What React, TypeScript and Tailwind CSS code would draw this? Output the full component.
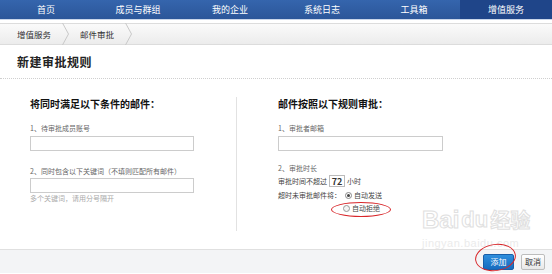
import React from "react";

const tabs = ["首页", "成员与群组", "我的企业", "系统日志", "工具箱", "增值服务"];

function Chevron() {
  return (
    <svg width="7" height="22" viewBox="0 0 7 22" className="mx-[11px]">
      <path d="M0.5 0 L6.5 11 L0.5 22" fill="none" stroke="#c8c8c8" strokeWidth="1" />
    </svg>
  );
}

export default function App() {
  return (
    <div className="relative w-[552px] h-[274px] overflow-hidden bg-white font-['Noto_Sans_CJK_SC',sans-serif] text-[#333]">
      {/* top nav */}
      <div className="flex h-[19px] bg-gradient-to-b from-[#3565ad] to-[#2b5699]">
        {tabs.map((t, i) => (
          <div
            key={t}
            className={
              i === 5
                ? "flex-1 flex items-center justify-center text-[9px] text-white bg-[#1f4589]"
                : "flex-1 flex items-center justify-center text-[9px] text-white"
            }
          >
            {t}
          </div>
        ))}
      </div>
      <div className="h-[1px] bg-[#c9d6ea]" />
      <div className="h-[3px] bg-white" />

      {/* breadcrumb */}
      <div className="flex items-center h-[22px] px-[17px] bg-gradient-to-b from-[#fafafa] to-[#ececec] border-y border-[#dcdcdc] text-[8.5px] text-[#333]">
        <span>增值服务</span>
        <Chevron />
        <span>邮件审批</span>
        <Chevron />
      </div>

      {/* title */}
      <div className="px-[17px] pt-[9px] pb-[8px] border-b border-dotted border-[#cfcfcf]">
        <div className="text-[12px] font-bold text-[#222] leading-[16px] tracking-[0.5px]">新建审批规则</div>
      </div>

      {/* body */}
      <div className="flex pl-[30px] pt-[18px] h-[170px]">
        <div className="w-[207px] border-r border-[#e2e2e2] h-[134px]">
          <div className="text-[10px] font-bold text-[#111] leading-[13px]">将同时满足以下条件的邮件：</div>
          <div className="mt-[14px] text-[7px] text-[#666] leading-[9px]">1、待审批成员账号</div>
          <div className="mt-[3px] w-[164px] h-[15px] border border-[#cccccc] bg-white" />
          <div className="mt-[16px] text-[7px] text-[#666] leading-[9px]">2、同时包含以下关键词（不填则匹配所有邮件）</div>
          <div className="mt-[2px] w-[164px] h-[15px] border border-[#cccccc] bg-white" />
          <div className="mt-[1px] text-[7px] text-[#aaa] leading-[9px]">多个关键词，请用分号隔开</div>
        </div>
        <div className="pl-[41px]">
          <div className="text-[10px] font-bold text-[#111] leading-[13px]">邮件按照以下规则审批：</div>
          <div className="mt-[14px] text-[7px] text-[#666] leading-[9px]">1、审批者邮箱</div>
          <div className="mt-[3px] w-[165px] h-[15px] border border-[#cccccc] bg-white" />
          <div className="mt-[13px] text-[7px] text-[#666] leading-[9px]">2、审批时长</div>
          <div className="mt-[2px] flex items-center text-[7px] text-[#444] leading-[9px]">
            <span>审批时间不超过</span>
            <span className="mx-[2px] w-[16px] h-[12px] border border-[#bbb] text-[9px] font-bold text-[#333] flex items-center justify-center">72</span>
            <span>小时</span>
          </div>
          <div className="mt-[4px] flex items-center text-[7px] text-[#444] leading-[9px]">
            <span>超时未审批邮件将：</span>
            <span className="ml-[4px] w-[7px] h-[7px] rounded-full border border-[#888] flex items-center justify-center">
              <span className="w-[3px] h-[3px] rounded-full bg-[#444]" />
            </span>
            <span className="ml-[2px]">自动发送</span>
          </div>
          <div className="mt-[4px] ml-[65px] flex items-center text-[7px] text-[#444] leading-[9px]">
            <span className="w-[7px] h-[7px] rounded-full border border-[#999] bg-[#f4f4f4]" />
            <span className="ml-[2px]">自动拒绝</span>
          </div>
        </div>
      </div>

      {/* footer */}
      <div className="flex items-center justify-end gap-[7px] h-[24px] pr-[7px] bg-[#f3f4f6] border-t border-[#e0e0e0]">
        <div className="w-[31px] h-[16px] flex items-center justify-center rounded-[2px] bg-gradient-to-b from-[#2f8fdd] to-[#176bbf] border border-[#1a5fa8] text-[8px] text-white">添加</div>
        <div className="w-[24px] h-[16px] flex items-center justify-center rounded-[2px] bg-gradient-to-b from-white to-[#e8e8e8] border border-[#bdbdbd] text-[8px] text-[#333]">取消</div>
      </div>

      {/* watermark */}
      <div className="absolute left-[422px] top-[208px] pointer-events-none select-none">
        <div className="flex items-end text-transparent [-webkit-text-stroke:1px_#e0e0e0] font-['Liberation_Sans',sans-serif] font-bold">
          <span className="text-[24px] leading-[24px]">Bai</span>
          <span className="text-[22px] leading-[24px] ml-[2px]">du</span>
          <span className="text-[20px] leading-[24px] ml-[2px] font-['Noto_Sans_CJK_SC',sans-serif]">经验</span>
        </div>
        <div className="mt-[5px] text-[11px] leading-[12px] text-[#ebebeb] font-['Liberation_Sans',sans-serif] tracking-[0.5px]">jingyan.baidu.com</div>
      </div>

      {/* red annotation ellipses */}
      <div className="absolute left-[331px] top-[202px] w-[60px] h-[15px] rounded-[50%] border-[1.5px] border-[#d8262a]" />
      <div className="absolute left-[475px] top-[244px] w-[41px] h-[27px] rounded-[50%] border-[1.5px] border-[#d8262a] -rotate-[8deg]" />
    </div>
  );
}
